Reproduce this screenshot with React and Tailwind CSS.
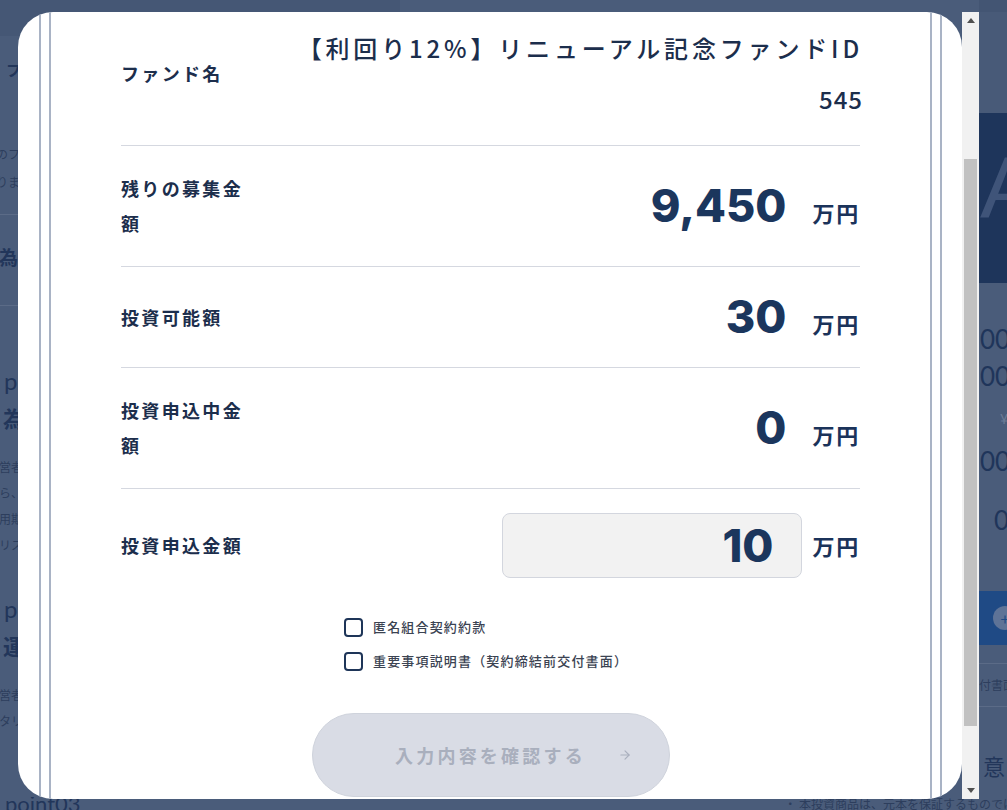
import { ArrowRight } from 'lucide-react';

const JP = "font-['Noto_Sans_CJK_JP','Noto_Sans',sans-serif]";
const NUM = "font-['Inter','Liberation_Sans',sans-serif]";

const Row = ({ label, children, className = '' }) => (
  <div className={`flex items-center border-b border-[#d5d8e0] ${className}`}>
    <div className="w-[130px] shrink-0 text-[18px] font-bold leading-[35px] tracking-[0.13em] text-[#1c2e4c]">
      {label}
    </div>
    <div className="flex flex-1 justify-end">{children}</div>
  </div>
);

const Unit = ({ className = '' }) => (
  <span className={`text-[22px] font-bold tracking-[0.08em] text-[#1b335a] ${className}`}>万円</span>
);

const Amount = ({ value }) => (
  <div className="flex items-baseline">
    <span className={`${NUM} text-[45px] font-extrabold leading-[50px] text-[#1b365d]`}>{value}</span>
    <Unit className="ml-[26px]" />
  </div>
);

const Checkbox = ({ children }) => (
  <label className="flex h-[20px] items-center gap-[10px]">
    <span className="h-[19px] w-[19px] rounded-[4px] border-2 border-[#1e3558] bg-white" />
    <span className="text-[13px] font-medium tracking-[0.09em] text-[#3b4352]">{children}</span>
  </label>
);

const Scrollbar = () => (
  <div className="flex h-full w-[17px] flex-col bg-[#f1f1f1]">
    <div className="flex h-[17px] items-center justify-center">
      <svg width="8" height="5" viewBox="0 0 8 5"><polygon points="4,0 8,5 0,5" fill="#505050" /></svg>
    </div>
    <div className="flex-1 px-[2px]">
      <div className="mt-[130px] h-[567px] bg-[#c1c1c1]" />
    </div>
    <div className="flex h-[17px] items-center justify-center">
      <svg width="8" height="5" viewBox="0 0 8 5"><polygon points="0,0 8,0 4,5" fill="#505050" /></svg>
    </div>
  </div>
);

const Backdrop = () => (
  <div className="flex h-full flex-col text-[#22365a]">
    <div className="flex h-[797px]">
      <div className="w-[400px] shrink-0 overflow-hidden">
        <div className="h-[36px] bg-[#455775]" />
        <div className="ml-[6px] mt-[24px] text-[15px] font-bold leading-[20px]">ファンド情報</div>
        <div className="-ml-[4px] mt-[60px] text-[12px] leading-[28px] text-[#2d3e5d]">
          <div>のファンドは</div>
          <div>ります</div>
        </div>
        <div className="mt-[18px] border-b border-[#5b6b87]" />
        <div className="-ml-[1px] mt-[30px] text-[19px] font-bold leading-[24px]">為替について</div>
        <div className="mt-[36px] border-b border-[#5b6b87]" />
        <div className="ml-[4px] mt-[60px] font-['Lato',sans-serif] text-[24px] leading-[30px]">point01</div>
        <div className="ml-[3px] mt-[6px] text-[22px] font-bold leading-[30px]">為替</div>
        <div className="-ml-[1px] mt-[22px] text-[12px] leading-[26px] text-[#2d3e5d]">
          <div>営者</div>
          <div>ら、</div>
          <div>用期</div>
          <div>リス</div>
        </div>
        <div className="ml-[4px] mt-[36px] font-['Lato',sans-serif] text-[24px] leading-[30px]">point02</div>
        <div className="ml-[3px] mt-[6px] text-[22px] font-bold leading-[30px]">運用</div>
        <div className="-ml-[1px] mt-[22px] text-[12px] leading-[26px] text-[#2d3e5d]">
          <div>営者</div>
          <div>タリ</div>
        </div>
      </div>
      <div className="flex-1" />
      <div className="w-[28px] shrink-0 overflow-hidden whitespace-nowrap">
        <div className="h-[12px] bg-[#435573]" />
        <div className="h-[101px] bg-[#485a78]" />
        <div className="h-[170px] bg-[#1e355b] pl-[1px] font-['Liberation_Sans',sans-serif] text-[88px] leading-[150px] text-[#3f5479]">A</div>
        <div className="pl-[1px] font-['Lato',sans-serif] text-[26px] leading-[37px] text-[#1f355a]">
          <div className="mt-[38px]">00</div>
          <div>00</div>
          <div className="pl-[20px] text-[14px] leading-[48px] text-[#6a7a95]">¥</div>
          <div>00</div>
          <div className="mt-[22px] pl-[14px]">0</div>
        </div>
        <div className="mt-[52px] flex h-[54px] items-center bg-[#1f4a85] pl-[14px]">
          <div className="flex h-[24px] w-[24px] shrink-0 items-center justify-center rounded-full bg-[#5e7397] text-[16px] text-[#1f4a85]">+</div>
        </div>
        <div className="mt-[18px] border-b border-[#5b6b87]" />
        <div className="text-[12px] leading-[42px] text-[#2d3e5d]">付書面</div>
        <div className="border-b border-[#5b6b87]" />
        <div className="mt-[43px] pl-[4px] text-[22px] leading-[30px]">意</div>
      </div>
    </div>
    <div className="flex h-[13px] items-start justify-between overflow-hidden">
      <div className="-mt-[4px] ml-[5px] font-['Lato',sans-serif] text-[22px] leading-[22px]">point03</div>
      <div className="mr-[-8px] text-[12px] leading-[14px] text-[#2d3e5d]">・ 本投資商品は、元本を保証するものでは</div>
    </div>
  </div>
);

export default function App() {
  return (
    <div className={`relative h-[810px] w-full overflow-hidden bg-[#4a5c7a] ${JP}`}>
      <Backdrop />

      <div className="absolute left-[18px] top-[12px] flex h-[787px] w-[961px]">
        <div className="h-full w-[944px] overflow-hidden rounded-[35px] bg-white pl-[21px] pr-[20px]">
          <div className="h-full border-x-2 border-[#a9b3c5] px-[8px]">
            <div className="h-full border-x-2 border-[#a9b3c5] px-[70px]">
              <Row label="ファンド名" className="pb-[21px] pt-[10px]">
                <div className="-mr-[3px] text-right text-[24px] font-medium leading-[51px] tracking-[0.16em] text-[#1c2e4c]">
                  <div>【利回り12%】リニューアル記念ファンドID</div>
                  <div className="tracking-[0.04em]">545</div>
                </div>
              </Row>
              <Row label="残りの募集金額" className="py-[25px]">
                <Amount value="9,450" />
              </Row>
              <Row label="投資可能額" className="py-[25px]">
                <Amount value="30" />
              </Row>
              <Row label="投資申込中金額" className="py-[25px]">
                <Amount value="0" />
              </Row>
              <Row label="投資申込金額" className="border-b-0 py-[24px]">
                <div className="flex items-center">
                  <div className={`flex h-[65px] w-[300px] items-center justify-end rounded-[8px] border border-[#d3d6de] bg-[#f2f2f2] pr-[28px] ${NUM} text-[45px] font-extrabold text-[#1b365d]`}>
                    10
                  </div>
                  <Unit className="ml-[10px]" />
                </div>
              </Row>

              <div className="ml-[223px] mt-[15px] flex w-fit flex-col gap-[14px]">
                <Checkbox>匿名組合契約約款</Checkbox>
                <Checkbox>重要事項説明書（契約締結前交付書面）</Checkbox>
              </div>

              <button
                type="button"
                disabled
                className="relative mx-auto mt-[42px] flex h-[84px] w-[358px] items-center justify-center rounded-full border border-[#cfd3dc] bg-[#d9dce5] text-[18px] font-bold tracking-[0.18em] text-[#a9afbd]"
              >
                入力内容を確認する
                <ArrowRight className="absolute right-[37px] top-1/2 h-[14px] w-[14px] -translate-y-1/2" strokeWidth={2} />
              </button>
            </div>
          </div>
        </div>
        <Scrollbar />
      </div>
    </div>
  );
}
